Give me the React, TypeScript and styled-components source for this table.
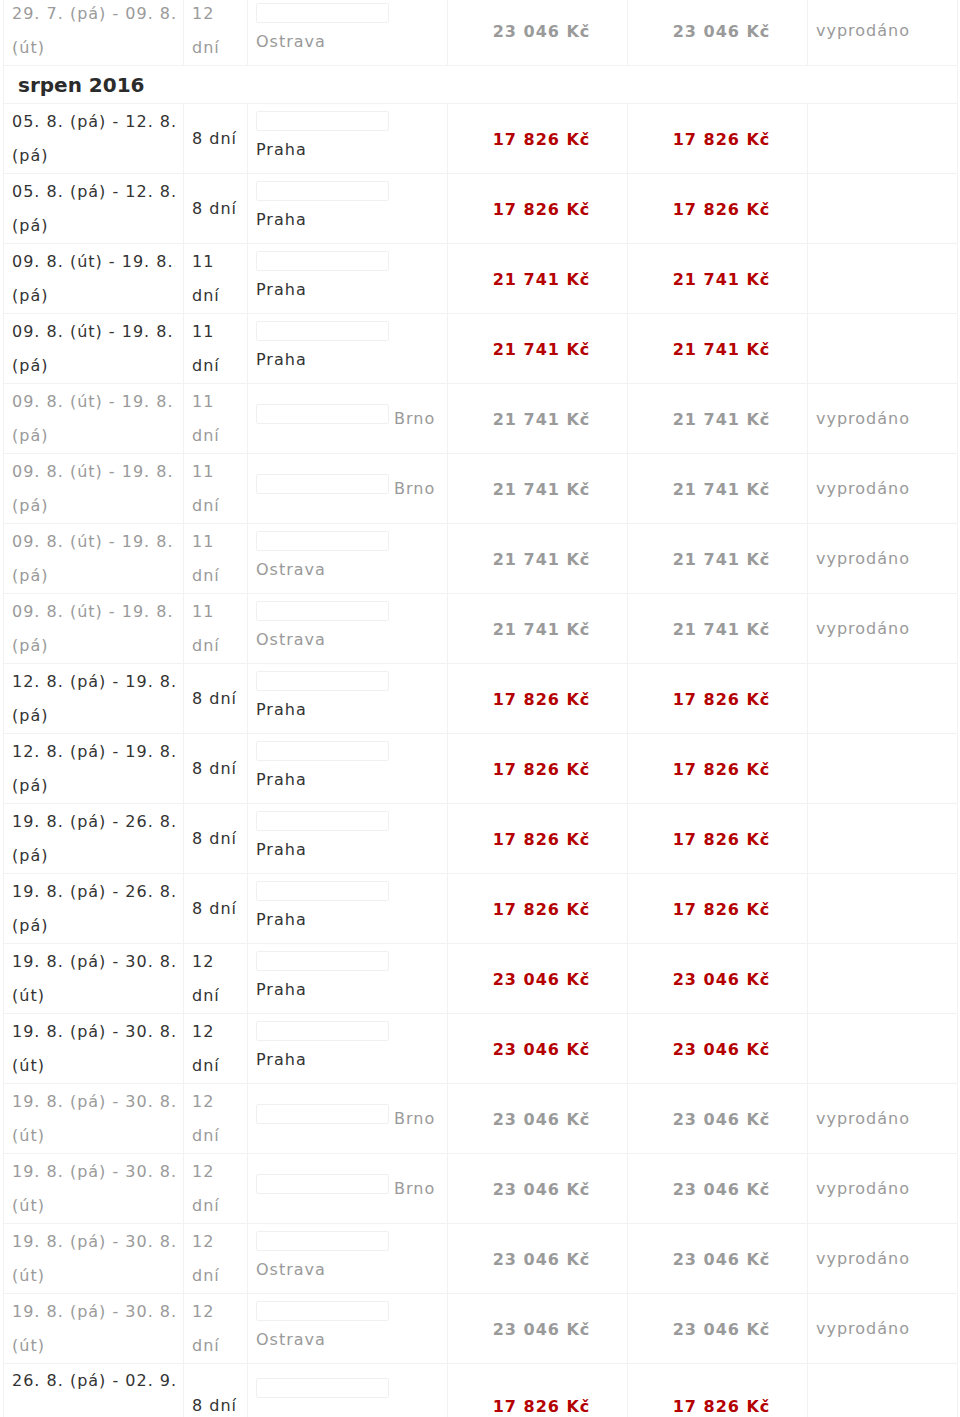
import React from "react";
import styled, { createGlobalStyle } from "styled-components";

const GlobalStyle = createGlobalStyle`
  html, body { margin: 0; padding: 0; background: #fff; }
  body { font-family: "DejaVu Sans", Verdana, sans-serif; }
`;

type Term = {
  from: string;
  to: string;
  days: number;
  place: string;
  price: string;
  soldOut: boolean;
  tall?: boolean;
};

const Page = styled.div`
  padding: 0 0 0 3px;
  margin-top: -5px;
`;

const Table = styled.table`
  border-collapse: collapse;
  table-layout: fixed;
  width: 954px;
`;

const Row = styled.tr<{ $tall?: boolean }>`
  height: ${(p) => (p.$tall ? 84 : 70)}px;
`;

const Cell = styled.td<{ $muted?: boolean; $top?: boolean }>`
  border: 1px solid #f2f2f2;
  padding: ${(p) => (p.$top ? "0 8px" : "1px 8px 0")};
  vertical-align: ${(p) => (p.$top ? "top" : "middle")};
  font-size: 16px;
  line-height: 34px;
  letter-spacing: 1px;
  color: ${(p) => (p.$muted ? "#9a9a9a" : "#333")};
  overflow: hidden;
`;

const Line = styled.span`
  display: block;
  white-space: nowrap;
`;

const PriceCell = styled(Cell)`
  text-align: center;
  padding: 2px 8px 0 16px;
  font-weight: bold;
  color: ${(p) => (p.$muted ? "#9a9a9a" : "#b40000")};
`;

const MonthCell = styled.td`
  border: 1px solid #f2f2f2;
  height: 37px;
  padding: 0 0 0 14px;
  font-size: 20px;
  font-weight: bold;
  color: #2b2b2b;
  vertical-align: middle;
`;

const PlaceStack = styled.div`
  display: flex;
  flex-direction: column;
  align-items: flex-start;
  gap: 6px;
  min-height: 52px;
  padding-bottom: 4px;
  line-height: 26px;
`;

const PlaceInline = styled.div`
  line-height: 34px;
  white-space: nowrap;
`;

const SeatBox = styled.span`
  display: inline-block;
  box-sizing: border-box;
  width: 133px;
  height: 20px;
  border: 1px solid #f0f0f0;
  border-radius: 2px;
  background: #fff;
  margin-right: 5px;
`;

const terms: Term[] = [
  { from: "05. 8. (pá)", to: "12. 8.", days: 8, place: "Praha", price: "17 826 Kč", soldOut: false },
  { from: "05. 8. (pá)", to: "12. 8.", days: 8, place: "Praha", price: "17 826 Kč", soldOut: false },
  { from: "09. 8. (út)", to: "19. 8.", days: 11, place: "Praha", price: "21 741 Kč", soldOut: false },
  { from: "09. 8. (út)", to: "19. 8.", days: 11, place: "Praha", price: "21 741 Kč", soldOut: false },
  { from: "09. 8. (út)", to: "19. 8.", days: 11, place: "Brno", price: "21 741 Kč", soldOut: true },
  { from: "09. 8. (út)", to: "19. 8.", days: 11, place: "Brno", price: "21 741 Kč", soldOut: true },
  { from: "09. 8. (út)", to: "19. 8.", days: 11, place: "Ostrava", price: "21 741 Kč", soldOut: true },
  { from: "09. 8. (út)", to: "19. 8.", days: 11, place: "Ostrava", price: "21 741 Kč", soldOut: true },
  { from: "12. 8. (pá)", to: "19. 8.", days: 8, place: "Praha", price: "17 826 Kč", soldOut: false },
  { from: "12. 8. (pá)", to: "19. 8.", days: 8, place: "Praha", price: "17 826 Kč", soldOut: false },
  { from: "19. 8. (pá)", to: "26. 8.", days: 8, place: "Praha", price: "17 826 Kč", soldOut: false },
  { from: "19. 8. (pá)", to: "26. 8.", days: 8, place: "Praha", price: "17 826 Kč", soldOut: false },
  { from: "19. 8. (pá)", to: "30. 8.", days: 12, place: "Praha", price: "23 046 Kč", soldOut: false },
  { from: "19. 8. (pá)", to: "30. 8.", days: 12, place: "Praha", price: "23 046 Kč", soldOut: false },
  { from: "19. 8. (pá)", to: "30. 8.", days: 12, place: "Brno", price: "23 046 Kč", soldOut: true },
  { from: "19. 8. (pá)", to: "30. 8.", days: 12, place: "Brno", price: "23 046 Kč", soldOut: true },
  { from: "19. 8. (pá)", to: "30. 8.", days: 12, place: "Ostrava", price: "23 046 Kč", soldOut: true },
  { from: "19. 8. (pá)", to: "30. 8.", days: 12, place: "Ostrava", price: "23 046 Kč", soldOut: true },
];

const endDay = (to: string) => {
  if (to.startsWith("30.") || to.startsWith("09. 8.")) return "(út)";
  return "(pá)";
};

function TermRow({ t, partial }: { t: Term; partial?: boolean }) {
  const muted = t.soldOut;
  return (
    <Row $tall={t.tall}>
      <Cell $muted={muted} $top={t.tall}>
        <Line>
          {t.from} - {t.to}
        </Line>
        {!partial && <Line>{endDay(t.to)}</Line>}
      </Cell>
      <Cell $muted={muted}>
        {t.days >= 10 ? (
          <>
            <Line>{t.days}</Line>
            <Line>dní</Line>
          </>
        ) : (
          <Line>{t.days} dní</Line>
        )}
      </Cell>
      <Cell $muted={muted}>
        {t.place === "Brno" ? (
          <PlaceInline>
            <SeatBox />
            {t.place}
          </PlaceInline>
        ) : (
          <PlaceStack>
            <SeatBox />
            {!partial && <span>{t.place}</span>}
          </PlaceStack>
        )}
      </Cell>
      <PriceCell $muted={muted}>{t.price}</PriceCell>
      <PriceCell $muted={muted}>{t.price}</PriceCell>
      <Cell $muted={muted}>{t.soldOut ? "vyprodáno" : ""}</Cell>
    </Row>
  );
}

export default function App() {
  return (
    <>
      <GlobalStyle />
      <Page>
        <Table>
          <colgroup>
            <col style={{ width: 180 }} />
            <col style={{ width: 64 }} />
            <col style={{ width: 200 }} />
            <col style={{ width: 180 }} />
            <col style={{ width: 180 }} />
            <col style={{ width: 150 }} />
          </colgroup>
          <tbody>
            <TermRow
              t={{ from: "29. 7. (pá)", to: "09. 8.", days: 12, place: "Ostrava", price: "23 046 Kč", soldOut: true }}
            />
            <tr>
              <MonthCell colSpan={6}>srpen 2016</MonthCell>
            </tr>
            {terms.map((t, i) => (
              <TermRow key={i} t={t} />
            ))}
            <TermRow
              partial
              t={{ from: "26. 8. (pá)", to: "02. 9.", days: 8, place: "Praha", price: "17 826 Kč", soldOut: false, tall: true }}
            />
          </tbody>
        </Table>
      </Page>
    </>
  );
}
